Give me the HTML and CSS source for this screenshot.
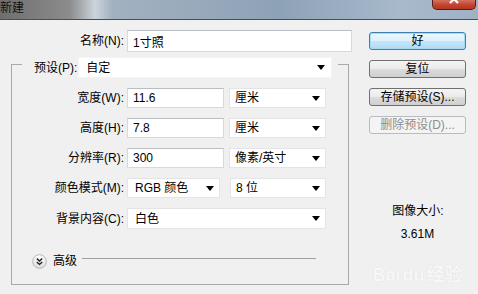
FILE: index.html
```html
<!DOCTYPE html>
<html lang="zh-CN">
<head>
<meta charset="utf-8">
<title>新建</title>
<link rel="stylesheet" href="styles.css">
</head>
<body>
<div class="window">
  <div class="titlebar">
    <span class="title">新建</span>
    <span class="close"><svg width="14" height="8" viewBox="0 0 14 8"><path d="M3 -4L11 4M11 -4L3 4" stroke="#fff" stroke-width="2.2" fill="none"/></svg></span>
  </div>
  <div class="dialog">
    <div class="main">
      <div class="row name-row">
        <label class="lbl">名称(N):</label>
        <input class="field name-field" value="1寸照">
      </div>
      <fieldset class="group">
        <legend class="legend">
          <span class="lbl-legend">预设(P):</span>
          <span class="select preset">自定<svg class="arrow" width="8" height="5" viewBox="0 0 8 5"><path d="M0 0H8L4 5Z"/></svg></span>
        </legend>
        <div class="rows">
          <div class="row">
            <label class="lbl">宽度(W):</label>
            <input class="field num" value="11.6">
            <span class="select unit">厘米<svg class="arrow" width="8" height="5" viewBox="0 0 8 5"><path d="M0 0H8L4 5Z"/></svg></span>
          </div>
          <div class="row">
            <label class="lbl">高度(H):</label>
            <input class="field num" value="7.8">
            <span class="select unit">厘米<svg class="arrow" width="8" height="5" viewBox="0 0 8 5"><path d="M0 0H8L4 5Z"/></svg></span>
          </div>
          <div class="row">
            <label class="lbl">分辨率(R):</label>
            <input class="field num" value="300">
            <span class="select unit">像素/英寸<svg class="arrow" width="8" height="5" viewBox="0 0 8 5"><path d="M0 0H8L4 5Z"/></svg></span>
          </div>
          <div class="row">
            <label class="lbl">颜色模式(M):</label>
            <span class="select mode">RGB 颜色<svg class="arrow" width="8" height="5" viewBox="0 0 8 5"><path d="M0 0H8L4 5Z"/></svg></span>
            <span class="select unit bits">8 位<svg class="arrow" width="8" height="5" viewBox="0 0 8 5"><path d="M0 0H8L4 5Z"/></svg></span>
          </div>
          <div class="row bg-row">
            <label class="lbl">背景内容(C):</label>
            <span class="select wide">白色<svg class="arrow" width="8" height="5" viewBox="0 0 8 5"><path d="M0 0H8L4 5Z"/></svg></span>
          </div>
        </div>
        <div class="advanced">
          <svg class="adv-icon" width="15" height="15" viewBox="0 0 15 15">
            <defs>
              <linearGradient id="g" x1="0" y1="0" x2="0" y2="1">
                <stop offset="0" stop-color="#ffffff"/>
                <stop offset="1" stop-color="#dcdcdc"/>
              </linearGradient>
            </defs>
            <circle cx="7.5" cy="7.5" r="6.8" fill="url(#g)" stroke="#b4b4b4" stroke-width="1"/>
            <path d="M4.8 4.6L7.5 7L10.2 4.6M4.8 8L7.5 10.4L10.2 8" fill="none" stroke="#222" stroke-width="1.4"/>
          </svg>
          <span class="adv-text">高级</span>
          <span class="adv-line"></span>
        </div>
      </fieldset>
    </div>
    <div class="side">
      <button class="btn default">好</button>
      <button class="btn">复位</button>
      <button class="btn">存储预设(S)...</button>
      <button class="btn" disabled>删除预设(D)...</button>
      <div class="size-label">图像大小:</div>
      <div class="size-value">3.61M</div>
      <div class="watermark">Bai<span class="paw">du</span>经验</div>
    </div>
  </div>
</div>
</body>
</html>
```
FILE: styles.css
```css
* { box-sizing: border-box; }
html, body {
  margin: 0;
  padding: 0;
  background: #f0f0f0;
  width: 478px;
  height: 294px;
  overflow: hidden;
  font-family: "Liberation Sans", "Noto Sans CJK SC", sans-serif;
  font-size: 12px;
  color: #000;
}
.window { display: flex; flex-direction: column; height: 294px; }
.titlebar {
  height: 20px;
  display: flex;
  align-items: flex-start;
  border-bottom: 1px solid #44505c;
  background: linear-gradient(90deg, #6e6e6e 0px, #8c8c8c 70px, #cbd4dc 95px, #a2b1c0 112px, #8ea2b7 280px, #a7b9cb 400px, #9fb2c5 478px);
}
.title {
  font-size: 12px;
  line-height: 14px;
  margin-top: 1px;
  color: #111;
}
.close {
  margin-left: auto;
  margin-right: 2px;
  width: 44px;
  height: 11px;
  margin-top: -1px;
  border: 1px solid #5a1c14;
  border-top: none;
  border-radius: 0 0 5px 5px;
  background: linear-gradient(180deg, #d87b6c, #c4442f 60%, #b8341f);
  display: flex;
  justify-content: center;
  align-items: flex-start;
  overflow: hidden;
}
.dialog {
  display: flex;
  padding: 10px 0 0 11px;
  gap: 17px;
}
.main { width: 341px; display: flex; flex-direction: column; }
.row { display: flex; align-items: center; height: 20px; }
.name-row { height: 22px; }
.lbl {
  width: 113px;
  margin-right: 3px;
  text-align: right;
  line-height: 14px;
  white-space: nowrap;
}
.field {
  height: 20px;
  border: 1px solid #d6dae0;
  border-top-color: #b9bec5;
  background: #fff;
  font: inherit;
  padding: 0 0 0 5px;
  margin: 0;
  outline: none;
  color: #000;
}
.name-field { width: 225px; height: 22px; }
.num { width: 97px; }
.select {
  display: flex;
  align-items: center;
  justify-content: space-between;
  height: 20px;
  background: #fff;
  border: 1px solid #e4e4e4;
  padding: 0 5px 0 5px;
  line-height: 14px;
  white-space: nowrap;
}
.arrow { fill: #000; flex: none; }
.unit { width: 97px; margin-left: 5px; }
.mode { width: 93px; padding-left: 7px; }
.bits { margin-left: 10px; width: 96px; }
.wide { width: 199px; padding-left: 7px; }
.bg-row { height: 21px; }
.bg-row .select { height: 21px; }

.group {
  margin: 5px 0 0 0;
  padding: 0 0 15px 0;
  width: 338px;
  border: 1px solid #a9a9a9;
  min-inline-size: 0;
}
.legend {
  margin-left: 10px;
  padding: 0 6px 0 12px;
  display: flex;
  align-items: flex-start;
  height: 15px;
}
.lbl-legend { line-height: 14px; margin-top: 4px; margin-right: 1px; white-space: nowrap; }
.preset { width: 254px; height: 21px; padding-left: 7px; padding-right: 6px; border-color: #f4f4f4; }
.rows {
  display: flex;
  flex-direction: column;
  gap: 10px;
  padding-top: 16px;
}
.rows .lbl { width: 112px; }
.advanced {
  display: flex;
  align-items: center;
  margin-top: 24px;
  padding-left: 20px;
  height: 16px;
}
.adv-icon { flex: none; }
.adv-text { margin-left: 6px; line-height: 14px; }
.adv-line {
  width: 234px;
  height: 1px;
  background: #a0a0a0;
  margin-left: 5px;
  margin-bottom: 6px;
}

.side {
  width: 97px;
  display: flex;
  flex-direction: column;
  gap: 10px;
  padding-top: 2px;
}
.btn {
  height: 18px;
  width: 97px;
  margin: 0;
  padding: 0;
  font: inherit;
  line-height: 14px;
  color: #000;
  border: 1px solid #707070;
  border-radius: 3px;
  background: linear-gradient(180deg, #f4f4f4 0%, #ebebeb 48%, #dcdcdc 52%, #cfcfcf 100%);
}
.btn.default {
  border-color: #3c7fb1;
  background: linear-gradient(180deg, #eef8fd 0%, #dcf0fb 48%, #c4e5f8 52%, #b2daf3 100%);
  box-shadow: inset 0 0 0 1px #a6dbf7;
}
.btn:disabled {
  color: #8d8d8d;
  border-color: #b8bcbf;
  background: #f4f4f4;
}
.size-label {
  margin-top: 59px;
  text-align: center;
  line-height: 16px;
  padding-left: 1px;
}
.size-value {
  margin-top: -3px;
  text-align: center;
  line-height: 16px;
}
.watermark {
  margin-top: 12px;
  text-align: center;
  font-size: 18px;
  font-weight: bold;
  line-height: 22px;
  color: #f7f7f7;
  text-shadow: 0 0 1px #d8d8d8;
  white-space: nowrap;
}
.paw { margin: 0 2px; }
```
